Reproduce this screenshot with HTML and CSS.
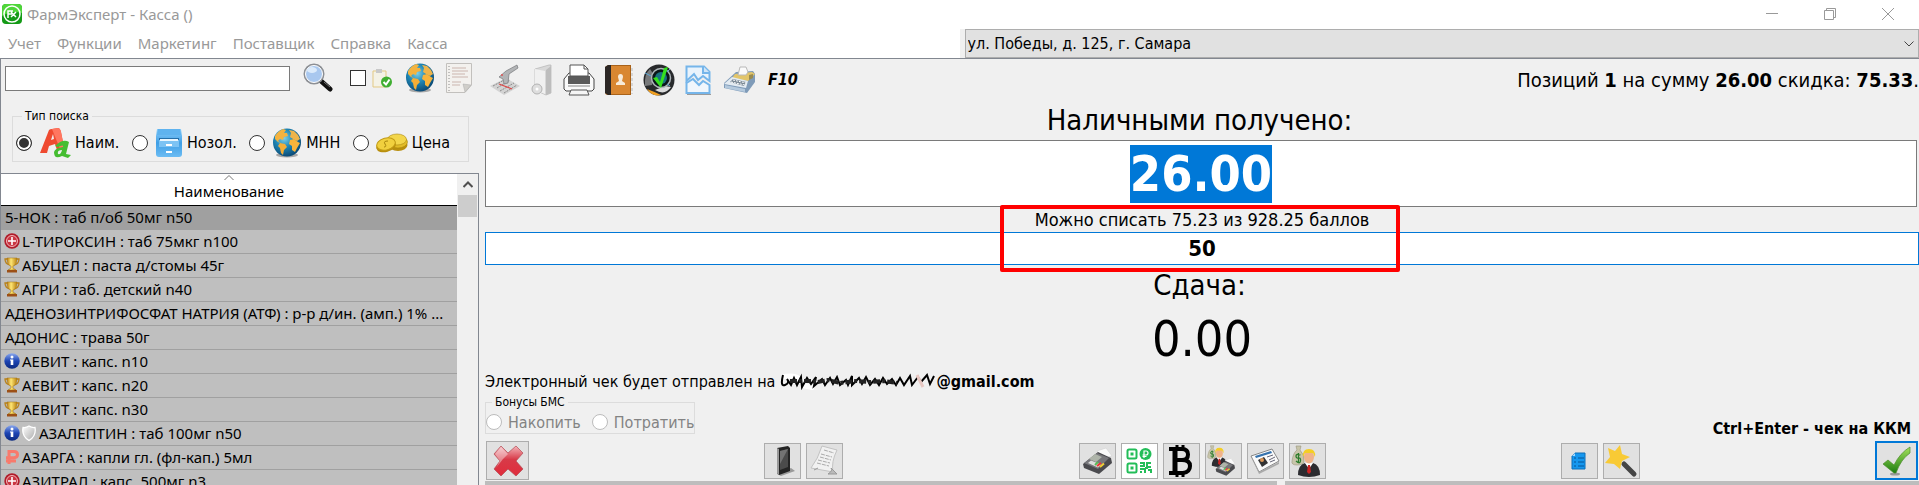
FILE: index.html
```html
<!DOCTYPE html>
<html lang="ru">

<head>
    <meta charset="UTF-8">
    <meta name="viewport" content="width=device-width, initial-scale=1.0">
    <title>ФармЭксперт - Касса ()</title>
    <link rel="stylesheet" href="styles.css">
</head>

<body>
    <!-- Shared icons -->
    <svg class="sprite" aria-hidden="true">
        <defs>
            <radialGradient id="sea" cx="40%" cy="35%" r="65%">
                <stop offset="0" stop-color="#7fd0e6"/>
                <stop offset="0.5" stop-color="#1f86b4"/>
                <stop offset="1" stop-color="#0b4c78"/>
            </radialGradient>
            <linearGradient id="gold" x1="0" x2="1">
                <stop offset="0" stop-color="#b97a12"/>
                <stop offset="0.4" stop-color="#ffe774"/>
                <stop offset="1" stop-color="#b8800f"/>
            </linearGradient>
            <linearGradient id="blue" x1="0" y1="0" x2="0" y2="1">
                <stop offset="0" stop-color="#8ba8ee"/>
                <stop offset="0.5" stop-color="#1d45b4"/>
                <stop offset="1" stop-color="#0c2a80"/>
            </linearGradient>
            <linearGradient id="cabinet" x1="0" y1="0" x2="0" y2="1">
                <stop offset="0" stop-color="#8fd0fa"/>
                <stop offset="0.5" stop-color="#3f9fe6"/>
                <stop offset="1" stop-color="#6cbcf3"/>
            </linearGradient>
            <linearGradient id="silver" x1="0" y1="0" x2="1" y2="1">
                <stop offset="0" stop-color="#ffffff"/>
                <stop offset="1" stop-color="#a9a9a9"/>
            </linearGradient>
            <linearGradient id="green" x1="0" y1="0" x2="0" y2="1">
                <stop offset="0" stop-color="#a5e25c"/>
                <stop offset="1" stop-color="#1d7d10"/>
            </linearGradient>
            <linearGradient id="red" x1="0" y1="0" x2="0" y2="1">
                <stop offset="0" stop-color="#f3b3b8"/>
                <stop offset="0.45" stop-color="#d83a48"/>
                <stop offset="1" stop-color="#e02c3c"/>
            </linearGradient>
        </defs>
        <symbol id="globe" viewBox="0 0 30 30">
            <ellipse cx="15" cy="27" rx="11" ry="2.500" fill="#000" opacity="0.3"/>
            <circle cx="15" cy="14.500" r="14" fill="url(#sea)"/>
            <path d="M3 8Q6 3 11 1L14 2 12 5 15 5 16 8 12 9 11 12 8 11 6 13 9 15 6 14 3 11Z" fill="#f3b340"/>
            <path d="M8 15L13 16 15 19 12 22 11 27 9 25 8 20 6 18Z" fill="#f5ae35"/>
            <path d="M17 2L22 3 26 7 28 11 25 13 21 11 18 9 19 5Z" fill="#efb44a"/>
            <path d="M18 12L22 11 26 14 28 15 25 20 23 24 20 22 20 18 17 16Z" fill="#f7b43c"/>
        </symbol>
        <symbol id="trophy" viewBox="0 0 16 16">
            <path d="M4 2H1Q1 7 6 8M12 2H15Q15 7 10 8" fill="none" stroke="#b9821b" stroke-width="1.300"/>
            <path d="M3 1H13Q13 8 9 9V11L12 13H4L7 11V9Q3 8 3 1Z" fill="url(#gold)" stroke="#a3700e" stroke-width="0.500"/>
            <path d="M3 13H13V15.500H3Z" fill="#9c4f16"/>
        </symbol>
        <symbol id="info" viewBox="0 0 16 16">
            <circle cx="8" cy="8" r="7.700" fill="url(#blue)"/>
            <circle cx="8" cy="4" r="1.500" fill="#fff"/>
            <path d="M6 6.500H9.300V12H6.700V7.500H6Z" fill="#fff"/>
        </symbol>
        <symbol id="cross" viewBox="0 0 16 16">
            <circle cx="8" cy="8" r="7.700" fill="#b01c2a"/>
            <circle cx="8" cy="8" r="5.500" fill="#c93642" stroke="#f3b4b8" stroke-width="1"/>
            <path d="M7.200 4H8.800V7.200H12V8.800H8.800V12H7.200V8.800H4V7.200H7.200Z" fill="#fff"/>
        </symbol>
        <symbol id="shield" viewBox="0 0 16 16">
            <path d="M8 1Q11 3 14 2.500Q15.500 11 8 15.500Q0.500 11 2 2.500Q5 3 8 1Z" fill="url(#silver)" stroke="#fff" stroke-width="1.300"/>
        </symbol>
        <symbol id="rouble" viewBox="0 0 16 16">
            <path d="M5 15V2.500H10Q13.500 2.500 13.500 5.500T10 8.700H2M2 12H12" fill="none" stroke="#f87a6c" stroke-width="3"/>
        </symbol>
        <symbol id="terminal" viewBox="0 0 32 30">
            <path d="M16 5L25 2 31 10 22 12Z" fill="#fafafa" stroke="#ccc" stroke-width="0.500"/>
            <path d="M2 18L17 6 30 12 31 17 18 28 3 22Z" fill="#4a4a4e"/>
            <path d="M3 17L16 7 28 12 17 23Z" fill="#77777b"/>
            <path d="M8 13L14 8 21 11 15 16Z" fill="#aeb4a9"/>
            <path d="M7 17L10 14.500 20 18.500 17 21.500Z" fill="#ddd"/>
            <path d="M16 20L20 17" stroke="#e33" stroke-width="2"/>
            <path d="M19 21L23 17.500" stroke="#ec3" stroke-width="2"/>
            <path d="M14 19L17 16" stroke="#5b5" stroke-width="2"/>
        </symbol>
        <symbol id="cashier" viewBox="0 0 32 32">
            <path d="M5 1H10L9 5Q14 10 13 17Q12 20 6 20Q0 20 1 16Q2 8 6 5Z" fill="#c8c5aa" stroke="#99967c" stroke-width="0.600"/>
            <path d="M9.500 10Q5 8.500 5 11T7.500 13T9.500 16T5 16M7.500 8V18" fill="none" stroke="#2b7c2b" stroke-width="1.300"/>
            <path d="M7 30Q7 20 14 18L18 21 22 18Q29 20 29 30Q18 34 7 30Z" fill="#2c2c30"/>
            <path d="M14 18L18 24 22 18Z" fill="#fff"/>
            <path d="M17 20H19L20 27 18 29 16 27Z" fill="#c22"/>
            <ellipse cx="18" cy="12" rx="5" ry="6.500" fill="#f0b389"/>
            <path d="M12 12Q11 4 18 4T24 12L22 8H14Z" fill="#f4ce25"/>
        </symbol>
    </svg>

    <header class="titlebar">
        <svg class="logo" viewBox="0 0 20 20">
            <rect width="20" height="20" rx="4" fill="#149a16"/>
            <path d="M0 4Q0 0 4 0H16Q20 0 20 4V9Q10 6 0 12Z" fill="#4fd63a"/>
            <circle cx="10" cy="10" r="8" fill="none" stroke="#fff" stroke-width="1.500"/>
            <path d="M6 14V7H11M6 10H10M9 8L14 13M14 8L9 13" fill="none" stroke="#fff" stroke-width="1.500"/>
        </svg>
        <h1>ФармЭксперт - Касса ()</h1>
        <div class="window-buttons">
            <button type="button" aria-label="Свернуть"><svg viewBox="0 0 12 12"><path d="M0 5.500H12"/></svg></button>
            <button type="button" aria-label="Восстановить"><svg viewBox="0 0 12 12"><path d="M0.500 2.500H9.500V11.500H0.500ZM2.500 2.500V0.500H11.500V9.500H9.500"/></svg></button>
            <button type="button" aria-label="Закрыть"><svg viewBox="0 0 12 12"><path d="M0 0L12 12M12 0L0 12"/></svg></button>
        </div>
    </header>

    <div class="menubar">
        <nav>
            <a href="#">Учет</a>
            <a href="#">Функции</a>
            <a href="#">Маркетинг</a>
            <a href="#">Поставщик</a>
            <a href="#">Справка</a>
            <a href="#">Касса</a>
        </nav>
        <div class="address">
            <select aria-label="Адрес аптеки">
                <option>ул. Победы, д. 125, г. Самара</option>
            </select>
            <svg viewBox="0 0 10 6"><path d="M0.500 0.500L5 5L9.500 0.500"/></svg>
        </div>
    </div>

    <main>
        <aside>
            <div class="search">
                <input type="text" aria-label="Поиск">
                <button type="button" class="tool" aria-label="Найти">
                    <svg width="30" height="30" viewBox="0 0 30 30">
                        <path d="M18 18L27 26" stroke="#111" stroke-width="5" stroke-linecap="round"/>
                        <path d="M21 19L27 24" stroke="#777" stroke-width="1"/>
                        <circle cx="11" cy="11" r="9.500" fill="#a9c8ef" stroke="#8c8f94" stroke-width="2"/>
                        <circle cx="11" cy="11" r="8.500" fill="none" stroke="#fff"/>
                        <ellipse cx="9" cy="7" rx="5" ry="3" fill="#dcebfb"/>
                    </svg>
                </button>
                <label class="stock">
                    <input type="checkbox" aria-label="В наличии">
                    <svg width="20" height="20" viewBox="0 0 20 20">
                        <path d="M1 3H14V19H1Z" fill="#f4f2e6" stroke="#e3c983"/>
                        <path d="M4 1H10V5H4Z" fill="#c9c9c9"/>
                        <circle cx="14.500" cy="14" r="5.500" fill="#3fae31"/>
                        <path d="M11.500 14L14 16.500L17.500 11.500" fill="none" stroke="#fff" stroke-width="2"/>
                    </svg>
                </label>
                <button type="button" class="tool" aria-label="МНН"><svg width="30" height="30"><use href="#globe"/></svg></button>
                <button type="button" class="tool" aria-label="Список">
                    <svg width="26" height="30" viewBox="0 0 26 30">
                        <path d="M0.500 0.500H25.500V22L19 29.500H0.500Z" fill="#f3f1ee" stroke="#c2c0bd"/>
                        <path d="M25 22L17 21L19 29Z" fill="#d0cec9" stroke="#aaa" stroke-width="0.500"/>
                        <path d="M3 3V28" stroke="#8c8c8c" stroke-dasharray="1 2"/>
                        <path d="M6 5H20M6 8H22M6 11H19M6 14H22M6 19H15M6 22H14" stroke="#cbb5ae"/>
                    </svg>
                </button>
            </div>

            <fieldset class="search-type">
                <legend>Тип поиска</legend>
                <label>
                    <input type="radio" name="search_type" checked>
                    <svg width="32" height="30" viewBox="0 0 32 30">
                        <path d="M1 25L10 2Q11 1 13 1L19 0Q21 0 22 4L25 19 18 22 16 16 10 18 8 25ZM12 12L15 11 14 6Z" fill="#ef4a30"/>
                        <path d="M13 1L19 0Q21 0 22 4L25 19 21 21Z" fill="#ff7660"/>
                        <path d="M16 18Q24 10 30 14L27 26 32 27 29 30 23 28Q15 32 15 24Q16 20 24 19Q25 16 19 19ZM23 22Q18 22 19 26Q22 27 23 22Z" fill="#45bd31"/>
                    </svg>
                    Наим.
                </label>
                <label>
                    <input type="radio" name="search_type">
                    <svg width="28" height="30" viewBox="0 0 28 30">
                        <path d="M2 1H26L27 8V26Q27 29 24 29H4Q1 29 1 26V8Z" fill="url(#cabinet)"/>
                        <path d="M3 1H25L26 7H2Z" fill="#5fb3ef"/>
                        <path d="M4 10H24V18H4Z" fill="#256fa9"/>
                        <path d="M4 12H24V19H4Z" fill="#7cc3f4"/>
                        <path d="M5 12H23" stroke="#e9f6ff" stroke-width="2"/>
                        <path d="M11 17H17M11 24H17" stroke="#fff" stroke-width="2"/>
                    </svg>
                    Нозол.
                </label>
                <label>
                    <input type="radio" name="search_type">
                    <svg width="30" height="30"><use href="#globe"/></svg>
                    МНН
                </label>
                <label>
                    <input type="radio" name="search_type">
                    <svg width="32" height="20" viewBox="0 0 32 20">
                        <ellipse cx="22" cy="12" rx="9.500" ry="6" fill="#b98f0e"/>
                        <ellipse cx="22" cy="9" rx="9.500" ry="6" fill="#e2bc28" stroke="#a8850d" stroke-width="0.600"/>
                        <ellipse cx="21" cy="6.500" rx="9.500" ry="5.500" fill="#f3d64b" stroke="#a8850d" stroke-width="0.600"/>
                        <ellipse cx="10" cy="13" rx="10" ry="6" fill="#b98f0e" transform="rotate(-15 10 13)"/>
                        <ellipse cx="10" cy="11" rx="9.500" ry="6" fill="#f1d03e" stroke="#c09a14" transform="rotate(-15 10 11)"/>
                        <path d="M12 8Q7 8 9 11T8 14" fill="none" stroke="#a8850d"/>
                    </svg>
                    Цена
                </label>
            </fieldset>

            <div class="goods">
                <table>
                    <thead>
                        <tr><th><svg width="10" height="6" viewBox="0 0 10 6"><path d="M0.500 5L5 0.500L9.500 5"/></svg>Наименование</th></tr>
                    </thead>
                    <tbody>
                        <tr class="selected"><td>5-НОК : таб п/об 50мг n50</td></tr>
                        <tr><td><svg><use href="#cross"/></svg>L-ТИРОКСИН : таб 75мкг n100</td></tr>
                        <tr><td><svg><use href="#trophy"/></svg>АБУЦЕЛ : паста д/стомы 45г</td></tr>
                        <tr><td><svg><use href="#trophy"/></svg>АГРИ : таб. детский n40</td></tr>
                        <tr><td>АДЕНОЗИНТРИФОСФАТ НАТРИЯ (АТФ) : р-р д/ин. (амп.) 1% ...</td></tr>
                        <tr><td>АДОНИС : трава 50г</td></tr>
                        <tr><td><svg><use href="#info"/></svg>АЕВИТ : капс. n10</td></tr>
                        <tr><td><svg><use href="#trophy"/></svg>АЕВИТ : капс. n20</td></tr>
                        <tr><td><svg><use href="#trophy"/></svg>АЕВИТ : капс. n30</td></tr>
                        <tr><td><svg><use href="#info"/></svg><svg><use href="#shield"/></svg>АЗАЛЕПТИН : таб 100мг n50</td></tr>
                        <tr><td><svg><use href="#rouble"/></svg>АЗАРГА : капли гл. (фл-кап.) 5мл</td></tr>
                        <tr><td><svg><use href="#cross"/></svg>АЗИТРАЛ : капс. 500мг n3</td></tr>
                    </tbody>
                </table>
                <div class="scrollbar">
                    <svg width="10" height="7" viewBox="0 0 10 7"><path d="M0.500 6L5 1.500L9.500 6"/></svg>
                    <div class="thumb"></div>
                </div>
            </div>
        </aside>

        <section class="checkout">
            <div class="toolbar">
                <button type="button" class="tool" aria-label="Сканер">
                    <svg width="32" height="32" viewBox="0 0 32 32">
                        <path d="M1 22L17 14 31 22 15 31Z" fill="#d3d3d3"/>
                        <path d="M4 22L17 15M8 24L21 16M11 27L25 19M15 29L28 21" stroke="#8a8a8a" stroke-dasharray="2 1"/>
                        <path d="M10 20L23 25" stroke="#d44" stroke-width="1.200"/>
                        <path d="M10 13L17 7 28 1 29 4 20 10 19 19 15 20 14 15Z" fill="#b2b4b6" stroke="#77797b" stroke-width="0.700"/>
                        <circle cx="13" cy="11" r="1" fill="#d55"/>
                    </svg>
                </button>
                <button type="button" class="tool" aria-label="Программа">
                    <svg width="22" height="32" viewBox="0 0 22 32">
                        <path d="M4 5L18 1H20V29L15 31 4 26Z" fill="#d8d8d8" stroke="#b5b5b5" stroke-width="0.700"/>
                        <path d="M4 5L14 7V30L4 26Z" fill="#f0f0f0"/>
                        <path d="M15 6L20 2V29L15 31Z" fill="#bdbdbd"/>
                        <circle cx="6" cy="25" r="5" fill="#dedede" stroke="#b2b2b2"/>
                        <circle cx="6" cy="25" r="1.500" fill="#fff"/>
                    </svg>
                </button>
                <button type="button" class="tool" aria-label="Печать">
                    <svg width="32" height="32" viewBox="0 0 32 32">
                        <path d="M1 15L6 9H26L31 15V25L29 27H3L1 25Z" fill="#fafafa" stroke="#444"/>
                        <path d="M5 12H27V20H5Z" fill="#5b5b5b"/>
                        <path d="M7 12V1H21L25 5V12Z" fill="#fff" stroke="#555"/>
                        <path d="M21 1V5H25" fill="none" stroke="#555"/>
                        <path d="M5 22H27" stroke="#888"/>
                        <path d="M8 26H24L26 31H6Z" fill="#f5f5f5" stroke="#555"/>
                    </svg>
                </button>
                <button type="button" class="tool" aria-label="Клиенты">
                    <svg width="28" height="32" viewBox="0 0 28 32">
                        <path d="M3 1H26V31H3Q0 31 0 28V3Z" fill="#a96219"/>
                        <path d="M6 2H25V30H6Z" fill="#d98731"/>
                        <path d="M0 3L3 1H6V31H3L0 29Z" fill="#2c2725"/>
                        <path d="M27 4V30" stroke="#b9b9b9" stroke-dasharray="3 2"/>
                        <path d="M13 13Q13 10 15.500 10T18 13L17 17 20 19V21H11V19L14 17Z" fill="#f7ebd9"/>
                    </svg>
                </button>
                <button type="button" class="tool" aria-label="Проверка">
                    <svg width="32" height="32" viewBox="0 0 32 32">
                        <circle cx="16" cy="16" r="15.500" fill="#282a2c"/>
                        <path d="M2 22Q1 10 7 5L11 11 9 21Z" fill="#77797b"/>
                        <path d="M4 25Q12 28 18 31Q9 33 4 25Z" fill="#f0a022"/>
                        <path d="M12 26Q22 32 28 23L22 22Z" fill="#d9dadb"/>
                        <circle cx="18" cy="14" r="9.500" fill="#0b1719" stroke="#aeb6ba" stroke-width="1.500"/>
                        <circle cx="18" cy="14" r="6" fill="#197180"/>
                        <path d="M10 14L14 13 17 18 21 4 25 3 18 24Z" fill="#35e01f"/>
                        <path d="M2 9L8 12M27 5L24 8M27 22L24 20" stroke="#5ba8d8"/>
                    </svg>
                </button>
                <button type="button" class="tool" aria-label="Разделить чек">
                    <svg width="28" height="30" viewBox="0 0 28 30">
                        <path d="M1.500 16V1.500H19L24.500 7V16L18 11 13 15 9 9Z" fill="#e9f3fc" stroke="#75b5ea" stroke-width="2"/>
                        <path d="M18 1V8H25" fill="#cfe5f8" stroke="#75b5ea" stroke-width="2"/>
                        <path d="M1.500 18L8 14 14 20 18 16 24.500 20V28H1.500Z" fill="#f0f6fc" stroke="#75b5ea" stroke-width="2"/>
                        <path d="M2 29.500H26" stroke="#9b9b9b"/>
                    </svg>
                </button>
                <button type="button" class="tool" aria-label="Касса">
                    <svg width="33" height="28" viewBox="0 0 33 28">
                        <path d="M13 6L30 5 32 8V16L24 27 1 22V17Z" fill="#7f9bb8"/>
                        <path d="M12 8L29 6 32 8 25 15 9 12Z" fill="#e2c56a"/>
                        <path d="M1 18L9 11 25 15 23 22Z" fill="#e3ebf2"/>
                        <path d="M2 19L22 23V26L2 22Z" fill="#b4c9dd"/>
                        <path d="M7 16L10 13 23 16 21 20Z" fill="#798895"/>
                        <path d="M8 16L22 19M10 14L23 17" stroke="#fff" stroke-dasharray="2 1"/>
                        <path d="M15 9L17 1H23L25 6 23 9Z" fill="#fafafa" stroke="#b8b8b8"/>
                        <path d="M26 9L30 8V12L26 14Z" fill="#9a8b4f"/>
                    </svg>
                </button>
                <strong class="hotkey">F10</strong>
                <p class="total">Позиций <b>1</b> на сумму <b>26.00</b> скидка: <b>75.33</b>.</p>
            </div>

            <label class="caption" for="cash">Наличными получено:</label>
            <input type="text" class="cash" id="cash" value="26.00">
            <div class="points">
                <label for="points">Можно списать 75.23 из 928.25 баллов</label>
                <input type="text" id="points" value="50">
                <div class="highlight"></div>
            </div>
            <div class="caption">Сдача:</div>
            <output class="change" for="cash points">0.00</output>

            <p class="receipt">Электронный чек будет отправлен на
                <svg width="156" height="18" viewBox="0 0 156 18" aria-hidden="true">
                    <path d="M2 5Q20 1 25 14L34 16" fill="none" stroke="#fff" stroke-width="5"/>
                    <path d="M3 3Q0 15 5 13T7 7L11 13L14 6L17 13L21 5L22 15L27 6L31 12L36 5L34 14L42 7L45 13L50 6L53 12L57 5L60 13L66 8L68 13L72 4V13L79 6L82 12L86 5L90 13L95 7L99 13L103 6L107 12L112 7L116 13L120 6L124 13L130 4L132 13L138 5L141 10L147 3L150 12L154 4" fill="none" stroke="#000" stroke-width="2"/>
                    <path d="M10 9H32L38 10 48 8 60 11 76 9 90 10 104 9 117 11" fill="none" stroke="#222" stroke-width="4" stroke-dasharray="7 2 3 2"/>
                    <path d="M137 3L143 15" stroke="#e7c7c2" stroke-width="3"/>
                </svg><b>@gmail.com</b>
            </p>

            <div class="bonus-row">
                <fieldset class="bonus" disabled>
                    <legend>Бонусы БМС</legend>
                    <label><input type="radio" name="bonus">Накопить</label>
                    <label><input type="radio" name="bonus">Потратить</label>
                </fieldset>
                <strong>Ctrl+Enter - чек на ККМ</strong>
            </div>

            <div class="actions">
                <button type="button" class="large" aria-label="Отмена">
                    <svg width="34" height="34" viewBox="0 0 34 34">
                        <path d="M3 10L10 2 17 9 25 2 32 9 25 17 32 25 25 32 17 25 10 32 3 25 9 17Z" fill="url(#red)" stroke="#b34a53" stroke-width="0.700"/>
                        <path d="M4 10L10 3 17 10 12 15 5 24 9 17Z" fill="#fff" opacity="0.400"/>
                    </svg>
                </button>
                <div class="group">
                    <button type="button" aria-label="Телефон">
                        <svg width="32" height="32" viewBox="0 0 32 32">
                            <path d="M10 29L24 23 28 26 14 31Z" fill="#999"/>
                            <path d="M10 3L21 1 23 3V26L12 30 10 28Z" fill="#242424"/>
                            <path d="M10 3L12 4V30L10 28Z" fill="#999"/>
                            <path d="M13 6L21 4V22L13 25Z" fill="#4b4b4b"/>
                            <path d="M13 6L21 4 13 19Z" fill="#737373"/>
                        </svg>
                    </button>
                    <button type="button" aria-label="Чек">
                        <svg width="32" height="32" viewBox="0 0 32 32">
                            <path d="M13 1L28 5Q22 17 24 27L2 23Q9 14 13 1Z" fill="#f1f1f1" stroke="#c3c3c3"/>
                            <path d="M15 5L25 8M12 9L23 12M11 12L22 15M9 15L21 18M8 18L20 21" stroke="#aaa" stroke-dasharray="4 1"/>
                            <path d="M5 25L9 23M19 29Q24 26 22 23L28 29Z" fill="#bbb" stroke="#999"/>
                        </svg>
                    </button>
                </div>
                <div class="group">
                    <button type="button" aria-label="Карта"><svg width="32" height="30"><use href="#terminal"/></svg></button>
                    <button type="button" class="white" aria-label="QR-код">
                        <svg width="26" height="26" viewBox="0 0 26 26" fill="none" stroke="#22bd58">
                            <rect x="1.500" y="1.500" width="9" height="9" rx="1.500" stroke-width="2"/>
                            <rect x="1.500" y="15.500" width="9" height="9" rx="1.500" stroke-width="2"/>
                            <path d="M4.500 6H7.500M4.500 20H7.500" stroke-width="3"/>
                            <circle cx="19.500" cy="6" r="6" fill="#22bd58" stroke="none"/>
                            <path d="M18 10V3H20Q22 3 22 5T20 7H16.500M16.500 8.500H20.500" stroke="#fff" stroke-width="1.200"/>
                            <path d="M14 15H18V18H14M21 14V19H25M14 21H19V25M22 22H25V25M14 24H16M21 15H25M19 20H22" stroke-width="2"/>
                        </svg>
                    </button>
                    <button type="button" aria-label="Биткойн">
                        <svg width="26" height="32" viewBox="0 0 26 32" fill="none" stroke="#000">
                            <path d="M1 4H14Q20 4 20 9.500T14 15H8M14 15Q22 15 22 21T15 28H1" stroke-width="4"/>
                            <path d="M7 4V28" stroke-width="5"/>
                            <path d="M9 0V4M15 0V4M9 28V32M15 28V32" stroke-width="3"/>
                        </svg>
                    </button>
                    <button type="button" aria-label="Смешанная оплата">
                        <svg width="34" height="32" viewBox="0 0 34 32">
                            <use href="#cashier" x="1" y="0" width="22" height="22"/>
                            <use href="#terminal" x="8" y="12" width="22" height="20"/>
                        </svg>
                    </button>
                    <button type="button" aria-label="Карта клиента">
                        <svg width="30" height="26" viewBox="0 0 30 26">
                            <path d="M1 8L22 1 29 13 9 24Z" fill="#fafafa" stroke="#888"/>
                            <path d="M1 8L9 24 29 14V16L9 26Z" fill="#aaa"/>
                            <path d="M5 8L21 3 22 5 6 10Z" fill="#3673ae"/>
                            <path d="M8 12L14 9 18 15 12 19Z" fill="#333"/>
                            <circle cx="12" cy="12" r="2" fill="#dd9857"/>
                            <path d="M17 9L23 7M19 12L25 9M20 14L25 12" stroke="#667"/>
                        </svg>
                    </button>
                    <button type="button" aria-label="Наличные"><svg width="32" height="32"><use href="#cashier"/></svg></button>
                </div>
                <div class="group">
                    <button type="button" aria-label="Рецепт">
                        <svg width="16" height="18" viewBox="0 0 16 18">
                            <path d="M4 1H14V17H1V4Z" fill="#1597ef" stroke="#0c6fb8"/>
                            <path d="M1 4L4 1V4Z" fill="#a5d9ff"/>
                            <path d="M3 6H5M3 10H5M3 14H5M7 6H13M7 10H13M7 14H13" stroke="#075596"/>
                        </svg>
                    </button>
                    <button type="button" aria-label="Акции">
                        <svg width="34" height="34" viewBox="0 0 34 34">
                            <path d="M20 20L30 30" stroke="#454545" stroke-width="5" stroke-linecap="round"/>
                            <path d="M16 1L18 10 26 13 18 17 16 25 10 20 1 19 6 13 4 4 11 7Z" fill="#f8ca35"/>
                        </svg>
                    </button>
                </div>
                <button type="button" class="large primary" aria-label="Провести чек">
                    <svg width="30" height="30" viewBox="0 0 30 30">
                        <ellipse cx="13" cy="28" rx="5" ry="1.500" fill="#999"/>
                        <path d="M1 18L6 14 12 19Q18 7 28 1V7Q19 13 14 27H12Z" fill="url(#green)" stroke="#4c8d2b" stroke-width="0.700"/>
                    </svg>
                </button>
            </div>

            <div class="panes">
                <div></div>
                <div></div>
            </div>
        </section>
    </main>

    <script>
        // The received amount is ready to be overwritten
        const cash = document.getElementById('cash');
        cash.focus();
        cash.select();
    </script>
</body>

</html>
```
FILE: styles.css
```css
* {
    margin: 0;
    padding: 0;
    box-sizing: border-box;
}

body {
    display: flex;
    flex-direction: column;
    height: 100vh;
    overflow: hidden;
    background: #fff;
    color: #000;
    font-family: "DejaVu Sans Condensed", "Noto Sans", sans-serif;
    font-size: 16px;
}

svg {
    display: block;
    flex: none;
}

button,
input,
select {
    font: inherit;
    color: inherit;
}

input:focus {
    outline: none;
}

fieldset {
    border: 1px solid #dcdcdc;
}

.sprite {
    position: absolute;
    width: 0;
    height: 0;
}

/* Title and menu */
.titlebar {
    display: flex;
    align-items: center;
    height: 28px;
    padding-left: 2px;
    color: #999;
}

.logo {
    width: 20px;
    height: 20px;
}

h1 {
    margin-left: 5px;
    font: 15px "Noto Sans", sans-serif;
}

.window-buttons {
    display: flex;
    margin-left: auto;
    padding-right: 2px;
}

.window-buttons button {
    display: flex;
    justify-content: center;
    width: 58px;
    border: none;
    background: none;
}

.window-buttons svg {
    width: 12px;
    height: 12px;
    fill: none;
    stroke: #999;
}

.menubar {
    display: flex;
    justify-content: space-between;
    height: 30px;
}

nav {
    display: flex;
    align-items: center;
    gap: 16px;
    padding-left: 8px;
    font: 15px "Noto Sans", sans-serif;
}

nav a {
    color: #999;
    text-decoration: none;
}

.address {
    display: grid;
    align-items: center;
    width: 50%;
    margin-top: 1px;
    padding-left: 5px;
    background: #f0f0f0;
}

.address select {
    grid-area: 1 / 1;
    width: 100%;
    height: 29px;
    padding-left: 2px;
    border: 1px solid #adadad;
    border-radius: 0;
    background: #e1e1e1;
    appearance: none;
}

.address svg {
    grid-area: 1 / 1;
    justify-self: end;
    width: 10px;
    height: 6px;
    margin-right: 5px;
    fill: none;
    stroke: #444;
    pointer-events: none;
}

/* Left column */
main {
    display: flex;
    flex: 1;
    min-height: 0;
    border-top: 1px solid #828790;
    border-left: 1px solid #828790;
    background: #f0f0f0;
}

aside {
    display: flex;
    flex-direction: column;
    flex: none;
    width: 478px;
}

.search {
    display: flex;
    align-items: center;
    height: 38px;
    padding-left: 4px;
}

.search > input {
    width: 285px;
    height: 25px;
    padding: 0 4px;
    border: 1px solid #7a7a7a;
    background: #fff;
}

.tool {
    border: none;
    background: none;
}

.search .tool {
    margin-left: 13px;
}

.search .tool:last-child {
    margin-left: 11px;
}

.stock {
    display: flex;
    align-items: center;
    gap: 6px;
    margin-left: 17px;
}

input[type="checkbox"],
input[type="radio"] {
    flex: none;
    width: 16px;
    height: 16px;
    border: 1px solid #333;
    background: #fff;
    appearance: none;
}

input[type="radio"] {
    border-radius: 50%;
}

input[type="radio"]:checked {
    border-color: #333;
    background: #333;
    box-shadow: inset 0 0 0 2px #fff;
}

.search-type {
    display: flex;
    justify-content: space-between;
    height: 55px;
    margin: 10px 10px 0 11px;
    padding: 0 18px 0 3px;
}

legend {
    margin-left: 6px;
    padding: 0 3px;
    font-size: 12px;
    line-height: 18px;
}

.search-type label {
    display: flex;
    align-items: center;
    gap: 4px;
    height: 35px;
}

.search-type input {
    margin-right: 3px;
}

.goods {
    display: flex;
    flex: 1;
    min-height: 0;
    margin-top: 11px;
    overflow: hidden;
    border: 1px solid #828790;
    border-width: 1px 1px 0 0;
}

.goods table {
    flex: 1;
    min-width: 0;
    height: max-content;
    border-collapse: separate;
    border-spacing: 0;
    table-layout: fixed;
    font: 15px "Noto Sans", sans-serif;
}

.goods th {
    height: 32px;
    border-bottom: 1px solid #000;
    background: #fff;
    font-weight: normal;
    line-height: 20px;
    vertical-align: top;
}

.goods th svg {
    margin: 1px auto 0;
    fill: none;
    stroke: #777;
}

.goods td {
    height: 24px;
    padding-left: 4px;
    border-bottom: 1px solid #a0a0a0;
    background: #bfbfbf;
    line-height: 23px;
    white-space: nowrap;
}

.goods .selected td {
    background: #a0a0a0;
}

.goods td svg {
    display: inline-block;
    width: 16px;
    height: 16px;
    margin: -3px 2px 0 -1px;
    vertical-align: middle;
}

.scrollbar {
    flex: none;
    width: 21px;
    padding: 0 1px;
}

.scrollbar svg {
    margin: 7px auto;
    fill: none;
    stroke: #505050;
    stroke-width: 2;
}

.thumb {
    height: 22px;
    background: #cdcdcd;
}

/* Payment */
.checkout {
    display: flex;
    flex: 1;
    flex-direction: column;
    min-width: 0;
    padding-left: 6px;
}

.toolbar {
    display: flex;
    align-items: center;
    gap: 10px;
    height: 41px;
    padding-left: 4px;
}

.hotkey {
    margin-left: 2px;
    font-style: italic;
}

.total {
    margin-left: auto;
    font-size: 20px;
}

.caption {
    display: block;
    height: 40px;
    padding-right: 5px;
    font-size: 29px;
    line-height: 40px;
    text-align: center;
}

.checkout > input,
.points input {
    display: block;
    background: #fff;
    font-weight: bold;
    text-align: center;
}

.cash {
    height: 67px;
    margin-right: 2px;
    border: 1px solid #7a7a7a;
    font-size: 50px;
}

.cash::selection {
    background: #0078d7;
    color: #fff;
}

.points {
    position: relative;
    font-size: 18px;
    text-align: center;
}

.points label {
    display: block;
    line-height: 25px;
}

.points input {
    width: 100%;
    height: 33px;
    border: 1px solid #0078d7;
    font-size: 22px;
}

.highlight {
    position: absolute;
    inset: -2px 5px -7px 0;
    width: 400px;
    margin: 0 auto;
    border: 4px solid #f00;
    border-radius: 2px;
    pointer-events: none;
}

.change {
    font-size: 50px;
    line-height: 68px;
    text-align: center;
}

.receipt {
    display: flex;
    align-items: center;
    height: 16px;
}

.receipt svg {
    margin-left: 5px;
}

.bonus-row {
    display: flex;
    align-items: flex-start;
    justify-content: space-between;
    height: 52px;
    padding-right: 8px;
}

.bonus-row strong {
    align-self: flex-end;
    line-height: 24px;
}

.bonus {
    display: flex;
    gap: 11px;
    height: 41px;
    margin-top: 4px;
    color: #838383;
}

.bonus legend {
    color: #000;
}

.bonus label {
    display: flex;
    align-items: center;
    gap: 6px;
    height: 22px;
}

.bonus input {
    border-color: #bcbcbc;
}

.actions {
    display: flex;
    align-items: center;
    justify-content: space-between;
    padding: 0 1px;
}

.group {
    display: flex;
    gap: 5px;
}

.actions button {
    display: flex;
    align-items: center;
    justify-content: center;
    width: 37px;
    height: 36px;
    border: 1px solid #adadad;
    background: #e1e1e1;
}

.actions .large {
    width: 43px;
    height: 39px;
}

.actions .white {
    background: #fff;
}

.actions .primary {
    border: 2px solid #0078d7;
}

.panes {
    display: flex;
    flex: 1;
    gap: 8px;
    margin-top: 1px;
}

.panes div {
    flex: 5;
    background: #bdbdbd;
}

.panes div:last-child {
    flex: 4;
}
```
